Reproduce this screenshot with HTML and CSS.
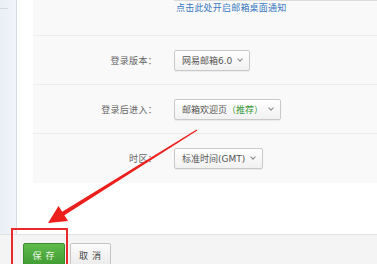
FILE: index.html
```html
<!DOCTYPE html>
<html lang="zh-CN">
<head>
  <meta charset="UTF-8" />
  <meta name="viewport" content="width=device-width, initial-scale=1.0" />
  <title>邮箱设置</title>
  <link rel="stylesheet" href="styles.css">
</head>

<body>

  <div class="page">
    <div class="sidebar">
      <div class="sidebar-line"></div>
    </div>

    <div class="main">
      <div class="panel">
        <div class="row row-top">
          <div class="label"></div>
          <div class="field">
            <div class="cut-line"></div>
            <a class="link" href="#">点击此处开启邮箱桌面通知</a>
          </div>
        </div>

        <div class="row">
          <div class="label">登录版本：</div>
          <div class="field">
            <span class="select">网易邮箱6.0 <i class="caret"></i></span>
          </div>
        </div>

        <div class="row">
          <div class="label">登录后进入：</div>
          <div class="field">
            <span class="select">邮箱欢迎页 <em class="tip">（推荐）</em><i class="caret"></i></span>
          </div>
        </div>

        <div class="row">
          <div class="label">时区：</div>
          <div class="field">
            <span class="select">标准时间(GMT) <i class="caret"></i></span>
          </div>
        </div>
      </div>
    </div>
  </div>

  <div class="toolbar">
    <button class="btn btn-save">保 存</button>
    <button class="btn btn-cancel">取 消</button>
  </div>

  <!-- marcação em vermelho por cima da tela -->
  <div class="mark-box"></div>
  <svg class="mark-arrow" width="377" height="264" viewBox="0 0 377 264">
    <polygon fill="#ec1f1c" points="48,223 58.5,205.9 62.2,211.8 196.7,129.6 197.3,130.4 64.4,215.2 68.1,221.1" />
  </svg>

</body>
</html>
```

FILE: styles.css
```css
* {
  margin: 0;
  padding: 0;
  box-sizing: border-box;
}

body {
  width: 377px;
  height: 264px;
  overflow: hidden;
  position: relative;
  background-color: #ffffff;
  font-family: 'Noto Sans CJK SC', 'DejaVu Sans', sans-serif;
  font-size: 9px;
  color: #555;
}

.page {
  display: flex;
  height: 234px;
}

.sidebar {
  width: 17px;
  background: linear-gradient(to right, #eaeff6, #f1f4f9);
  border-right: 1px solid #d6dde6;
  padding-top: 8px;
}

.sidebar-line {
  width: 8px;
  height: 1px;
  background-color: #d3d9e0;
}

.main {
  flex: 1;
  padding-left: 16px;
}

.panel {
  background-color: #f9f9f9;
  height: 183px;
}

.row {
  display: grid;
  grid-template-columns: 124px auto;
  column-gap: 17px;
  align-items: center;
  height: 49px;
  border-top: 1px solid #ececec;
}

.row-top {
  height: 35px;
  border-top: none;
  align-items: start;
}

.label {
  text-align: right;
  color: #666;
  letter-spacing: 0.3px;
}

.field {
  display: flex;
  flex-direction: column;
  align-items: flex-start;
}

.cut-line {
  width: 203px;
  height: 1px;
  background-color: #dcdcdc;
}

.link {
  color: #3a78c0;
  text-decoration: none;
  line-height: 13px;
  margin: 0 0 0 2px;
  letter-spacing: 0.2px;
}

.select {
  display: inline-flex;
  align-items: center;
  height: 21px;
  padding: 0 7px 0 7px;
  border: 1px solid #c9c9c9;
  border-radius: 2px;
  background: linear-gradient(to bottom, #ffffff, #f1f1f1);
  box-shadow: 0 1px 1px rgba(0, 0, 0, 0.06);
  font-family: 'DejaVu Sans', 'Noto Sans CJK SC', sans-serif;
  color: #555;
  white-space: nowrap;
}

.tip {
  font-style: normal;
  color: #3c9a3c;
}

.caret {
  display: inline-block;
  width: 4px;
  height: 4px;
  margin-left: 6px;
  margin-top: -3px;
  border-right: 1px solid #888;
  border-bottom: 1px solid #888;
  transform: rotate(45deg);
}

.toolbar {
  display: flex;
  gap: 5px;
  height: 30px;
  padding: 8px 0 0 23px;
  background-color: #f4f4f4;
  border-top: 1px solid #e2e2e2;
}

.btn {
  height: 24px;
  border-radius: 2px;
  font-family: 'Noto Sans CJK SC', 'DejaVu Sans', sans-serif;
  font-size: 9px;
  letter-spacing: 1px;
  cursor: pointer;
}

.btn-save {
  width: 42px;
  color: #e8f6e4;
  background: linear-gradient(to bottom, #5fbb4c, #3f9a30);
  border: 1px solid #3a8c2d;
}

.btn-cancel {
  width: 41px;
  color: #444;
  background: linear-gradient(to bottom, #fbfbfb, #ebebeb);
  border: 1px solid #c4c4c4;
}

.mark-box {
  position: absolute;
  left: 11px;
  top: 228px;
  width: 57px;
  height: 40px;
  border: 2px solid #ea2a2a;
}

.mark-arrow {
  position: absolute;
  left: 0;
  top: 0;
  pointer-events: none;
}
```
